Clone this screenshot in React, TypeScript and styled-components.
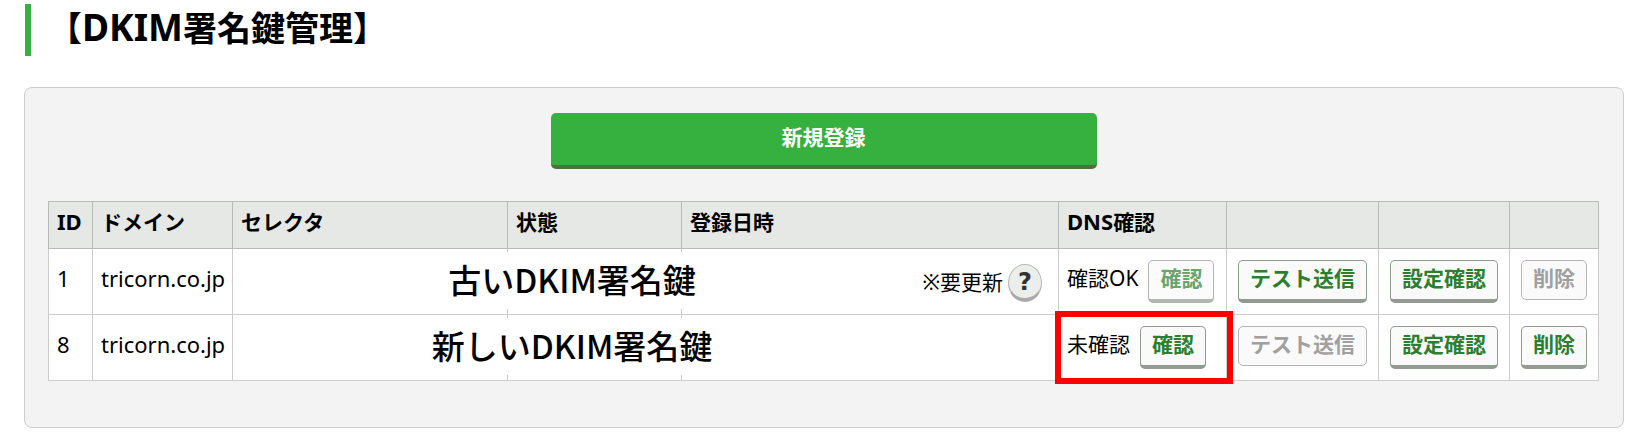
import React from "react";
import styled, { createGlobalStyle, css } from "styled-components";

const GlobalStyle = createGlobalStyle`
  *, *::before, *::after { box-sizing: border-box; }
  body {
    margin: 0;
    background: #fff;
    color: #000;
    font-family: "Noto Sans", "Noto Sans CJK JP", sans-serif;
    font-size: 21px;
  }
`;

const Page = styled.main`
  padding: 4px 26px 16px 24px;
`;

const Title = styled.h1`
  margin: 0 0 31px 1px;
  padding: 0 0 4px 17px;
  border-left: 6px solid #36b03f;
  font-size: 34px;
  line-height: 48px;
  font-weight: 700;
`;

/* Latin letters are set a little larger than the kana and kanji beside them. */
const Latin = styled.span<{ $large?: boolean }>`
  font-size: ${(p) => (p.$large ? 37 : 22)}px;
  line-height: 1;
`;

const Panel = styled.section`
  display: flex;
  flex-direction: column;
  align-items: center;
  gap: 32px;
  padding: 25px 24px 46px 23px;
  border: 1px solid #ccc;
  border-radius: 8px;
  background: #f3f3f3;
`;

const CreateButton = styled.button`
  width: 100%;
  max-width: 546px;
  padding: 0 0 4px;
  border: 0;
  border-bottom: 4px solid #4b7339;
  border-radius: 5px;
  background: #36b03f;
  color: #fff;
  font: inherit;
  font-weight: 700;
  line-height: 48px;
`;

const Table = styled.table`
  width: 100%;
  table-layout: fixed;
  border-collapse: collapse;
`;

const Col = styled.col<{ $width?: string }>`
  width: ${(p) => p.$width ?? "auto"};
`;

const HeadCell = styled.th`
  padding: 3px 8px 9px;
  border: 1px solid #b8bcb8;
  background: #e5e8e5;
  line-height: 34px;
  font-weight: 700;
  text-align: left;
  white-space: nowrap;
`;

const Cell = styled.td<{ $actions?: boolean }>`
  position: relative;
  padding: 11px ${(p) => (p.$actions ? 11 : 8)}px 11px;
  border: 1px solid #ccc;
  background: #fff;
  background-clip: padding-box;
  line-height: 38px;
  vertical-align: top;
  white-space: nowrap;
`;

const Inline = styled.div<{ $end?: boolean }>`
  display: flex;
  align-items: flex-start;
  gap: ${(p) => (p.$end ? 5 : 10)}px;
  line-height: 36px;
  ${(p) =>
    p.$end &&
    css`
      justify-content: flex-end;
      padding: 4px 8px 0 0;
    `}
`;

const ActionButton = styled.button<{ $faded?: boolean }>`
  display: block;
  padding: 0 11px 4px;
  border: 1px solid #929a92;
  border-bottom-width: 4px;
  border-radius: 5px;
  background: #fafafa;
  color: #2b7f2e;
  font: inherit;
  font-weight: 700;
  line-height: 34px;
  opacity: ${(p) => (p.$faded ? 0.7 : 1)};

  &:disabled {
    border-color: #b4b4b4;
    border-bottom-width: 1px;
    color: #a0a0a0;
  }
`;

const HelpButton = styled.button`
  width: 34px;
  height: 38px;
  padding: 0;
  border: 1px solid #b4b6b4;
  border-bottom: 4px solid #aaa;
  border-radius: 50%;
  background: #eceeec;
  color: #333;
  font-family: "DejaVu Sans", sans-serif;
  font-size: 24px;
  font-weight: 700;
  line-height: 32px;
`;

/* Spans the selector, status and most of the date column. */
const KeyNote = styled.div`
  position: absolute;
  z-index: 1;
  top: 3px;
  bottom: 5px;
  left: 2px;
  width: 246%;
  padding-bottom: 4px;
  display: flex;
  align-items: center;
  justify-content: center;
  background: #fff;
  font-family: "Noto Sans CJK JP", sans-serif;
  font-size: 33px;
  font-weight: 500;
  line-height: 48px;
`;

const Highlight = styled.div`
  position: absolute;
  z-index: 2;
  inset: -4px -7px -4px -4px;
  border: 6px solid #f00;
  pointer-events: none;
`;

const columns: { label: React.ReactNode; width?: string }[] = [
  { label: <Latin>ID</Latin>, width: "44px" },
  { label: "ドメイン", width: "140px" },
  { label: "セレクタ", width: "275px" },
  { label: "状態", width: "174px" },
  { label: "登録日時" },
  {
    label: (
      <>
        <Latin>DNS</Latin>確認
      </>
    ),
    width: "168px",
  },
  { label: "", width: "152px" },
  { label: "", width: "131px" },
  { label: "", width: "89px" },
];

const keys = [
  { id: 1, domain: "tricorn.co.jp", note: "古いDKIM署名鍵", dns: "確認OK", verified: true },
  { id: 8, domain: "tricorn.co.jp", note: "新しいDKIM署名鍵", dns: "未確認", verified: false },
];

export default function App() {
  return (
    <>
      <GlobalStyle />
      <Page>
        <Title>
          【<Latin $large>DKIM</Latin>署名鍵管理】
        </Title>
        <Panel>
          <CreateButton type="button">新規登録</CreateButton>
          <Table>
            <colgroup>
              {columns.map((c, i) => (
                <Col key={i} $width={c.width} />
              ))}
            </colgroup>
            <thead>
              <tr>
                {columns.map((c, i) => (
                  <HeadCell key={i} scope="col">
                    {c.label}
                  </HeadCell>
                ))}
              </tr>
            </thead>
            <tbody>
              {keys.map((k) => (
                <tr key={k.id}>
                  <Cell>
                    <Latin>{k.id}</Latin>
                  </Cell>
                  <Cell>
                    <Latin>{k.domain}</Latin>
                  </Cell>
                  <Cell>
                    <KeyNote>{k.note}</KeyNote>
                  </Cell>
                  <Cell />
                  <Cell>
                    {k.verified && (
                      <Inline $end>
                        <span>※要更新</span>
                        <HelpButton type="button">?</HelpButton>
                      </Inline>
                    )}
                  </Cell>
                  <Cell>
                    <Inline>
                      <span>{k.dns}</span>
                      <ActionButton type="button" $faded={k.verified}>
                        確認
                      </ActionButton>
                    </Inline>
                    {!k.verified && <Highlight />}
                  </Cell>
                  <Cell $actions>
                    <ActionButton type="button" disabled={!k.verified}>
                      テスト送信
                    </ActionButton>
                  </Cell>
                  <Cell $actions>
                    <ActionButton type="button">設定確認</ActionButton>
                  </Cell>
                  <Cell $actions>
                    <ActionButton type="button" disabled={k.verified}>
                      削除
                    </ActionButton>
                  </Cell>
                </tr>
              ))}
            </tbody>
          </Table>
        </Panel>
      </Page>
    </>
  );
}
